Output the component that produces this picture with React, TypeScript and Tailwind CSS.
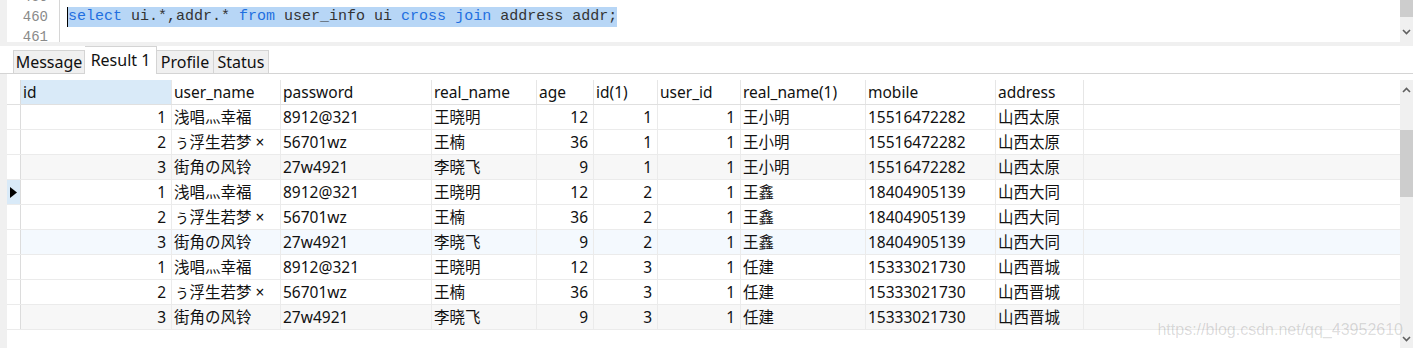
import React from "react";

type Col = { key: string; label: string; w: number; num?: boolean };

const cols: Col[] = [
  { key: "id", label: "id", w: 151, num: true },
  { key: "user_name", label: "user_name", w: 109 },
  { key: "password", label: "password", w: 151 },
  { key: "real_name", label: "real_name", w: 105 },
  { key: "age", label: "age", w: 57, num: true },
  { key: "id1", label: "id(1)", w: 64, num: true },
  { key: "user_id", label: "user_id", w: 83, num: true },
  { key: "real_name1", label: "real_name(1)", w: 125 },
  { key: "mobile", label: "mobile", w: 130 },
  { key: "address", label: "address", w: 88 },
];

const users = [
  ["1", "浅唱灬幸福", "8912@321", "王晓明", "12"],
  ["2", "ぅ浮生若梦 ×", "56701wz", "王楠", "36"],
  ["3", "街角の风铃", "27w4921", "李晓飞", "9"],
];

const addrs = [
  ["1", "1", "王小明", "15516472282", "山西太原"],
  ["2", "1", "王鑫", "18404905139", "山西大同"],
  ["3", "1", "任建", "15333021730", "山西晋城"],
];

const rows = addrs.flatMap((a) => users.map((u) => [...u, ...a]));

const rowBg = (i: number) => {
  if (i === 5) return "bg-[#f4f9fe]";
  if (i === 2 || i === 8) return "bg-[#f7f7f7]";
  return "bg-white";
};

function Chevron({ up }: { up?: boolean }) {
  return (
    <svg width="9" height="6" viewBox="0 0 9 6" className="block">
      <polyline
        points={up ? "1,5 4.5,1.5 8,5" : "1,1 4.5,4.5 8,1"}
        fill="none"
        stroke="#606060"
        strokeWidth="1.6"
      />
    </svg>
  );
}

const kw = "text-[#1f6fe0]";

export default function App() {
  return (
    <div className="relative flex h-[348px] w-[1413px] flex-col overflow-hidden bg-white font-['Noto_Sans','Noto_Sans_CJK_SC',sans-serif] text-[15.5px] text-[#111]">
      {/* editor */}
      <div className="flex h-[42px] shrink-0">
        <div className="w-[7px] bg-[#f0f0f0]" />
        <div className="w-[53px] overflow-hidden border-r border-[#d6d6d6] bg-white">
          <div className="-mt-[13px] flex flex-col items-end pr-[11px] font-['Liberation_Mono',monospace] text-[14px] leading-[20px] text-[#8a8a8a]">
            <span>459</span>
            <span>460</span>
            <span>461</span>
          </div>
        </div>
        <div className="flex-1 overflow-hidden pl-[7px]">
          <div className="-mt-[13px] font-['Liberation_Mono',monospace] text-[15px] leading-[20px] text-[#333]">
            <div className="h-[20px]" />
            <div className="flex h-[20px]">
              <span className="whitespace-pre border-l border-black bg-[#b7d6f6]">
                <span className={kw}>select</span> ui.*,addr.* <span className={kw}>from</span> user_info ui{" "}
                <span className={kw}>cross</span> <span className={kw}>join</span> address addr;
              </span>
            </div>
          </div>
        </div>
        <div className="flex w-[13px] flex-col items-center bg-[#f0f0f0]">
          <div className="h-[17px] w-full bg-[#cdcdcd]" />
          <div className="mt-[12px]">
            <Chevron />
          </div>
        </div>
      </div>

      <div className="h-[4px] shrink-0 bg-[#f0f0f0]" />

      {/* tabs */}
      <div className="flex h-[28px] shrink-0 items-end border-b border-[#d4d4d4] pl-[13px] text-[16px]">
        <div className="-mb-px flex h-[24px] w-[72px] items-center justify-center border border-[#d4d4d4] bg-[#f0f0f0]">
          Message
        </div>
        <div className="-mb-px flex h-[28px] w-[72px] items-start justify-center border border-b-0 border-l-0 border-[#d4d4d4] bg-white pt-[1px]">
          Result 1
        </div>
        <div className="-mb-px flex h-[24px] w-[57px] items-center justify-center border border-l-0 border-[#d4d4d4] bg-[#f0f0f0]">
          Profile
        </div>
        <div className="-mb-px flex h-[24px] w-[55px] items-center justify-center border border-l-0 border-[#d4d4d4] bg-[#f0f0f0]">
          Status
        </div>
      </div>

      {/* grid */}
      <div className="flex flex-1">
        <div className="w-[7px] bg-[#f0f0f0]" />
        <div className="flex-1 pt-[6px]">
          <div className="flex h-[25px] border-b border-[#e0e0e0]">
            <div className="w-[14px] shrink-0 border-r border-[#dcdcdc]" />
            {cols.map((c, i) => (
              <div
                key={c.key}
                style={{ width: c.w }}
                className={`flex shrink-0 items-center border-r border-[#e6e6e6] pl-[2px] pt-[2px] ${i === 0 ? "bg-[#d9eaf8]" : ""}`}
              >
                {c.label}
              </div>
            ))}
          </div>
          {rows.map((r, ri) => (
            <div key={ri} className={`flex h-[25px] border-b border-[#ebebeb] ${rowBg(ri)}`}>
              <div
                className={`flex w-[14px] shrink-0 items-center justify-center border-r border-[#dcdcdc] ${ri === 3 ? "bg-[#d9eaf8]" : "bg-white"}`}
              >
                {ri === 3 && (
                  <svg width="7" height="11" viewBox="0 0 7 11">
                    <polygon points="0,0 7,5.5 0,11" fill="#000" />
                  </svg>
                )}
              </div>
              {cols.map((c, ci) => (
                <div
                  key={c.key}
                  style={{ width: c.w }}
                  className={`flex shrink-0 items-center whitespace-pre border-r border-[#ebebeb] pt-[2px] ${c.num ? "justify-end pr-[5px]" : "pl-[2px]"}`}
                >
                  {r[ci]}
                </div>
              ))}
            </div>
          ))}
        </div>
        <div className="mt-[6px] flex w-[13px] flex-col items-center bg-[#f0f0f0]">
          <div className="mt-[7px]">
            <Chevron up />
          </div>
          <div className="mt-[37px] h-[67px] w-full bg-[#cdcdcd]" />
          <div className="flex-1" />
          <div className="mb-[6px]">
            <Chevron />
          </div>
        </div>
      </div>

      <div className="absolute bottom-[6px] right-[10px] font-['Liberation_Sans',sans-serif] text-[16px] text-[#000]/15">
        https://blog.csdn.net/qq_43952610
      </div>
    </div>
  );
}
